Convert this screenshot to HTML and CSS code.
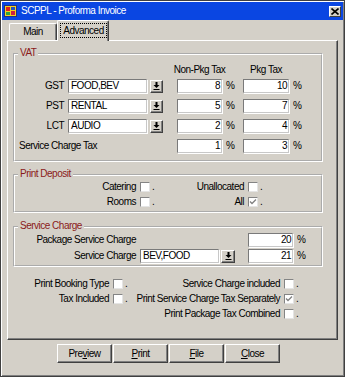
FILE: index.html
```html
<!DOCTYPE html>
<html>
<head>
<meta charset="utf-8">
<title>SCPPL - Proforma Invoice</title>
<link rel="stylesheet" href="styles.css">
</head>
<body>
<div class="window">
  <div class="titlebar">
    <svg class="appicon" width="14" height="14" viewBox="0 0 14 14">
      <rect x="0.5" y="1.5" width="12" height="11" fill="#f4d020" stroke="#203080"/>
      <rect x="2" y="3" width="4" height="4" fill="#e02020"/>
      <rect x="7" y="7" width="4" height="4" fill="#d02040"/>
      <rect x="7" y="3" width="4" height="3" fill="#2050c0"/>
      <rect x="2" y="8" width="4" height="3" fill="#30a040"/>
    </svg>
    <span class="title">SCPPL - Proforma Invoice</span>
    <span class="closebtn">
      <svg width="8" height="7" viewBox="0 0 8 7"><path d="M0.5 0.5 L7.5 6.5 M7.5 0.5 L0.5 6.5" stroke="#000" stroke-width="1.6"/></svg>
    </span>
  </div>

  <div class="content">
    <div class="tabs">
      <div class="tab">Main</div>
      <div class="tab active"><span class="focus">Advanced</span></div>
    </div>

    <div class="panel">
      <div class="group vat">
        <div class="legend">VAT</div>
        <div class="vat-head">
          <span class="sp162"></span>
          <span class="hcell w45">Non-Pkg Tax</span>
          <span class="sp21"></span>
          <span class="hcell w46">Pkg Tax</span>
        </div>
        <div class="vat-grid">
          <span class="lbl">GST</span>
          <span class="combo">FOOD,BEV</span>
          <span class="ddcell"><span class="ddbtn"><svg width="7" height="8" viewBox="0 0 7 8"><rect x="2.5" y="0" width="2" height="3" fill="#000"/><path d="M0.5 3 H6.5 L3.5 6 Z" fill="#000"/><rect x="0.5" y="7" width="6" height="1" fill="#000"/></svg></span></span>
          <span class="num">8</span><span class="pct">%</span>
          <span class="num">10</span><span class="pct">%</span>

          <span class="lbl">PST</span>
          <span class="combo">RENTAL</span>
          <span class="ddcell"><span class="ddbtn"><svg width="7" height="8" viewBox="0 0 7 8"><rect x="2.5" y="0" width="2" height="3" fill="#000"/><path d="M0.5 3 H6.5 L3.5 6 Z" fill="#000"/><rect x="0.5" y="7" width="6" height="1" fill="#000"/></svg></span></span>
          <span class="num">5</span><span class="pct">%</span>
          <span class="num">7</span><span class="pct">%</span>

          <span class="lbl">LCT</span>
          <span class="combo">AUDIO</span>
          <span class="ddcell"><span class="ddbtn"><svg width="7" height="8" viewBox="0 0 7 8"><rect x="2.5" y="0" width="2" height="3" fill="#000"/><path d="M0.5 3 H6.5 L3.5 6 Z" fill="#000"/><rect x="0.5" y="7" width="6" height="1" fill="#000"/></svg></span></span>
          <span class="num">2</span><span class="pct">%</span>
          <span class="num">4</span><span class="pct">%</span>

          <span class="lbl-wide">Service Charge Tax</span>
          <span class="num">1</span><span class="pct">%</span>
          <span class="num">3</span><span class="pct">%</span>
        </div>
      </div>

      <div class="group deposit">
        <div class="legend">Print Deposit</div>
        <div class="dep-grid">
          <span class="chk-item"><span class="clabel">Catering</span><span class="cbox"></span><span class="dot">.</span></span>
          <span class="chk-item"><span class="clabel">Unallocated</span><span class="cbox"></span><span class="dot">.</span></span>
          <span class="chk-item"><span class="clabel">Rooms</span><span class="cbox"></span><span class="dot">.</span></span>
          <span class="chk-item"><span class="clabel">All</span><span class="cbox"><svg width="8" height="8" viewBox="0 0 8 8"><path d="M1 3.5 L3 5.5 L7 1.5" fill="none" stroke="#808080" stroke-width="1.3"/></svg></span><span class="dot">.</span></span>
        </div>
      </div>

      <div class="group service">
        <div class="legend">Service Charge</div>
        <div class="sc-grid">
          <span class="lbl">Package Service Charge</span>
          <span class="num col4">20</span><span class="pct">%</span>

          <span class="lbl">Service Charge</span>
          <span class="combo">BEV,FOOD</span>
          <span class="ddcell"><span class="ddbtn wide"><svg width="7" height="8" viewBox="0 0 7 8"><rect x="2.5" y="0" width="2" height="3" fill="#000"/><path d="M0.5 3 H6.5 L3.5 6 Z" fill="#000"/><rect x="0.5" y="7" width="6" height="1" fill="#000"/></svg></span></span>
          <span class="num">21</span><span class="pct">%</span>
        </div>
      </div>

      <div class="bottom-grid">
        <span class="chk-item"><span class="clabel">Print Booking Type</span><span class="cbox"></span><span class="dot">.</span></span>
        <span class="chk-item"><span class="clabel">Service Charge included</span><span class="cbox"></span><span class="dot">.</span></span>
        <span class="chk-item"><span class="clabel">Tax Included</span><span class="cbox"></span><span class="dot">.</span></span>
        <span class="chk-item"><span class="clabel">Print Service Charge Tax Separately</span><span class="cbox"><svg width="8" height="8" viewBox="0 0 8 8"><path d="M1 3.5 L3 5.5 L7 1.5" fill="none" stroke="#808080" stroke-width="1.3"/></svg></span><span class="dot">.</span></span>
        <span class="chk-item col2"><span class="clabel">Print Package Tax Combined</span><span class="cbox"></span><span class="dot">.</span></span>
      </div>
    </div>

    <div class="buttons">
      <span class="btn">Pre<u>v</u>iew</span>
      <span class="btn"><u>P</u>rint</span>
      <span class="btn"><u>F</u>ile</span>
      <span class="btn"><u>C</u>lose</span>
    </div>
  </div>
</div>
</body>
</html>
```

FILE: styles.css
```css
* { box-sizing: border-box; }
html, body { margin: 0; padding: 0; }
body {
  font-family: "Liberation Sans", Arial, sans-serif;
  font-size: 10px;
  letter-spacing: -0.5px;
  color: #000;
  background: #fff;
}
.window {
  width: 345px;
  height: 377px;
  background: #d4d0c8;
  border: 1px solid #404040;
  box-shadow: inset 1px 1px 0 #fff, inset -1px -1px 0 #808080;
  padding: 1px;
  display: flex;
  flex-direction: column;
}
.titlebar {
  height: 18px;
  background: #0a46e2;
  color: #fff;
  display: flex;
  align-items: center;
  padding: 0 2px;
}
.appicon { margin-right: 3px; flex: none; }
.title { flex: 1; line-height: 18px; }
.closebtn {
  width: 12px;
  height: 11px;
  background: #d4d0c8;
  border: 1px solid;
  border-color: #fff #404040 #404040 #fff;
  display: flex;
  align-items: center;
  justify-content: center;
}
.closebtn svg { display: block; }

.content { padding: 0 5px; display: flex; flex-direction: column; }

.tabs {
  height: 20px;
  display: flex;
  align-items: flex-end;
  padding-left: 2px;
}
.tab {
  width: 48px;
  height: 17px;
  border-top: 1px solid #fff;
  border-left: 1px solid #fff;
  border-right: 1px solid #404040;
  box-shadow: inset -1px 0 0 #808080;
  border-radius: 2px 2px 0 0;
  text-align: center;
  line-height: 16px;
  background: #d4d0c8;
}
.tab.active {
  width: 52px;
  height: 21px;
  margin-bottom: -1px;
  position: relative;
  z-index: 1;
}
.focus {
  display: block;
  margin: 2px 1px 0 2px;
  height: 15px;
  line-height: 13px;
  border: 1px dotted #000;
}

.panel {
  height: 300px;
  border: 1px solid;
  border-color: #fff #404040 #404040 #fff;
  box-shadow: inset -1px -1px 0 #808080;
  padding: 12px 0 0 5px;
}

.group {
  width: 310px;
  border: 2px groove #fff;
}
.legend {
  display: table;
  margin: -8px 0 0 3px;
  padding: 0 2px;
  line-height: 12px;
  background: #d4d0c8;
  color: #8b1a1a;
}

.vat { padding-bottom: 7px; }
.vat-head {
  display: flex;
  margin-top: 5px;
  height: 12px;
  line-height: 12px;
}
.sp162 { width: 162px; flex: none; }
.sp21 { width: 21px; flex: none; }
.hcell { display: flex; justify-content: center; white-space: nowrap; flex: none; }
.w45 { width: 45px; }
.w46 { width: 46px; }

.vat-grid {
  display: grid;
  grid-template-columns: 53px 82px 27px 45px 21px 46px auto;
  grid-auto-rows: 14px;
  row-gap: 6px;
  margin-top: 3px;
  line-height: 14px;
}
.lbl { text-align: right; padding-right: 4px; white-space: nowrap; }
.lbl-wide { grid-column: 1 / 4; padding-left: 4px; white-space: nowrap; }
.combo, .num {
  background: #fff;
  border: 1px solid;
  border-color: #7a7a7a #c8c8c8 #c8c8c8 #7a7a7a;
  box-shadow: 1px 1px 0 #fff;
  line-height: 12px;
  height: 14px;
  white-space: nowrap;
  overflow: hidden;
}
.combo { width: 79px; padding-left: 2px; }
.num { text-align: right; padding-right: 1px; }
.pct { padding-left: 4px; }
.ddcell { display: flex; align-items: center; }
.ddbtn {
  width: 13px;
  height: 13px;
  background: #d4d0c8;
  border: 1px solid;
  border-color: #fff #404040 #404040 #fff;
  box-shadow: inset -1px -1px 0 #808080;
  display: flex;
  align-items: center;
  justify-content: center;
}
.ddbtn.wide { width: 14px; margin-left: 1px; }
.ddbtn svg { display: block; }

.deposit { margin-top: 12px; padding-bottom: 2px; }
.dep-grid {
  display: grid;
  grid-template-columns: 141px 108px;
  grid-auto-rows: 15px;
  margin-top: -1px;
}
.chk-item {
  justify-self: end;
  display: flex;
  align-items: center;
  white-space: nowrap;
}
.cbox {
  width: 10px;
  height: 10px;
  margin-left: 4px;
  background: #fff;
  border: 1px solid;
  border-color: #848484 #e4e4e4 #e4e4e4 #848484;
  display: flex;
  align-items: center;
  justify-content: center;
}
.cbox svg { display: block; }
.dot { width: 4px; margin-left: 2px; }

.service { margin-top: 13px; padding-bottom: 2px; }
.sc-grid {
  display: grid;
  grid-template-columns: 125px 80px 28px 45px auto;
  grid-auto-rows: 14px;
  row-gap: 2px;
  margin-top: 1px;
  line-height: 14px;
}
.col4 { grid-column: 4; }

.bottom-grid {
  display: grid;
  grid-template-columns: 121px 171px;
  grid-auto-rows: 15px;
  margin-top: 9px;
  margin-left: -5px;
}
.col2 { grid-column: 2; }

.buttons {
  display: flex;
  gap: 1px;
  padding-left: 50px;
  margin-top: 4px;
}
.btn {
  width: 55px;
  height: 19px;
  border: 1px solid;
  border-color: #fff #404040 #404040 #fff;
  box-shadow: inset -1px -1px 0 #808080;
  text-align: center;
  line-height: 17px;
}
.btn u { text-decoration: underline; }
```
